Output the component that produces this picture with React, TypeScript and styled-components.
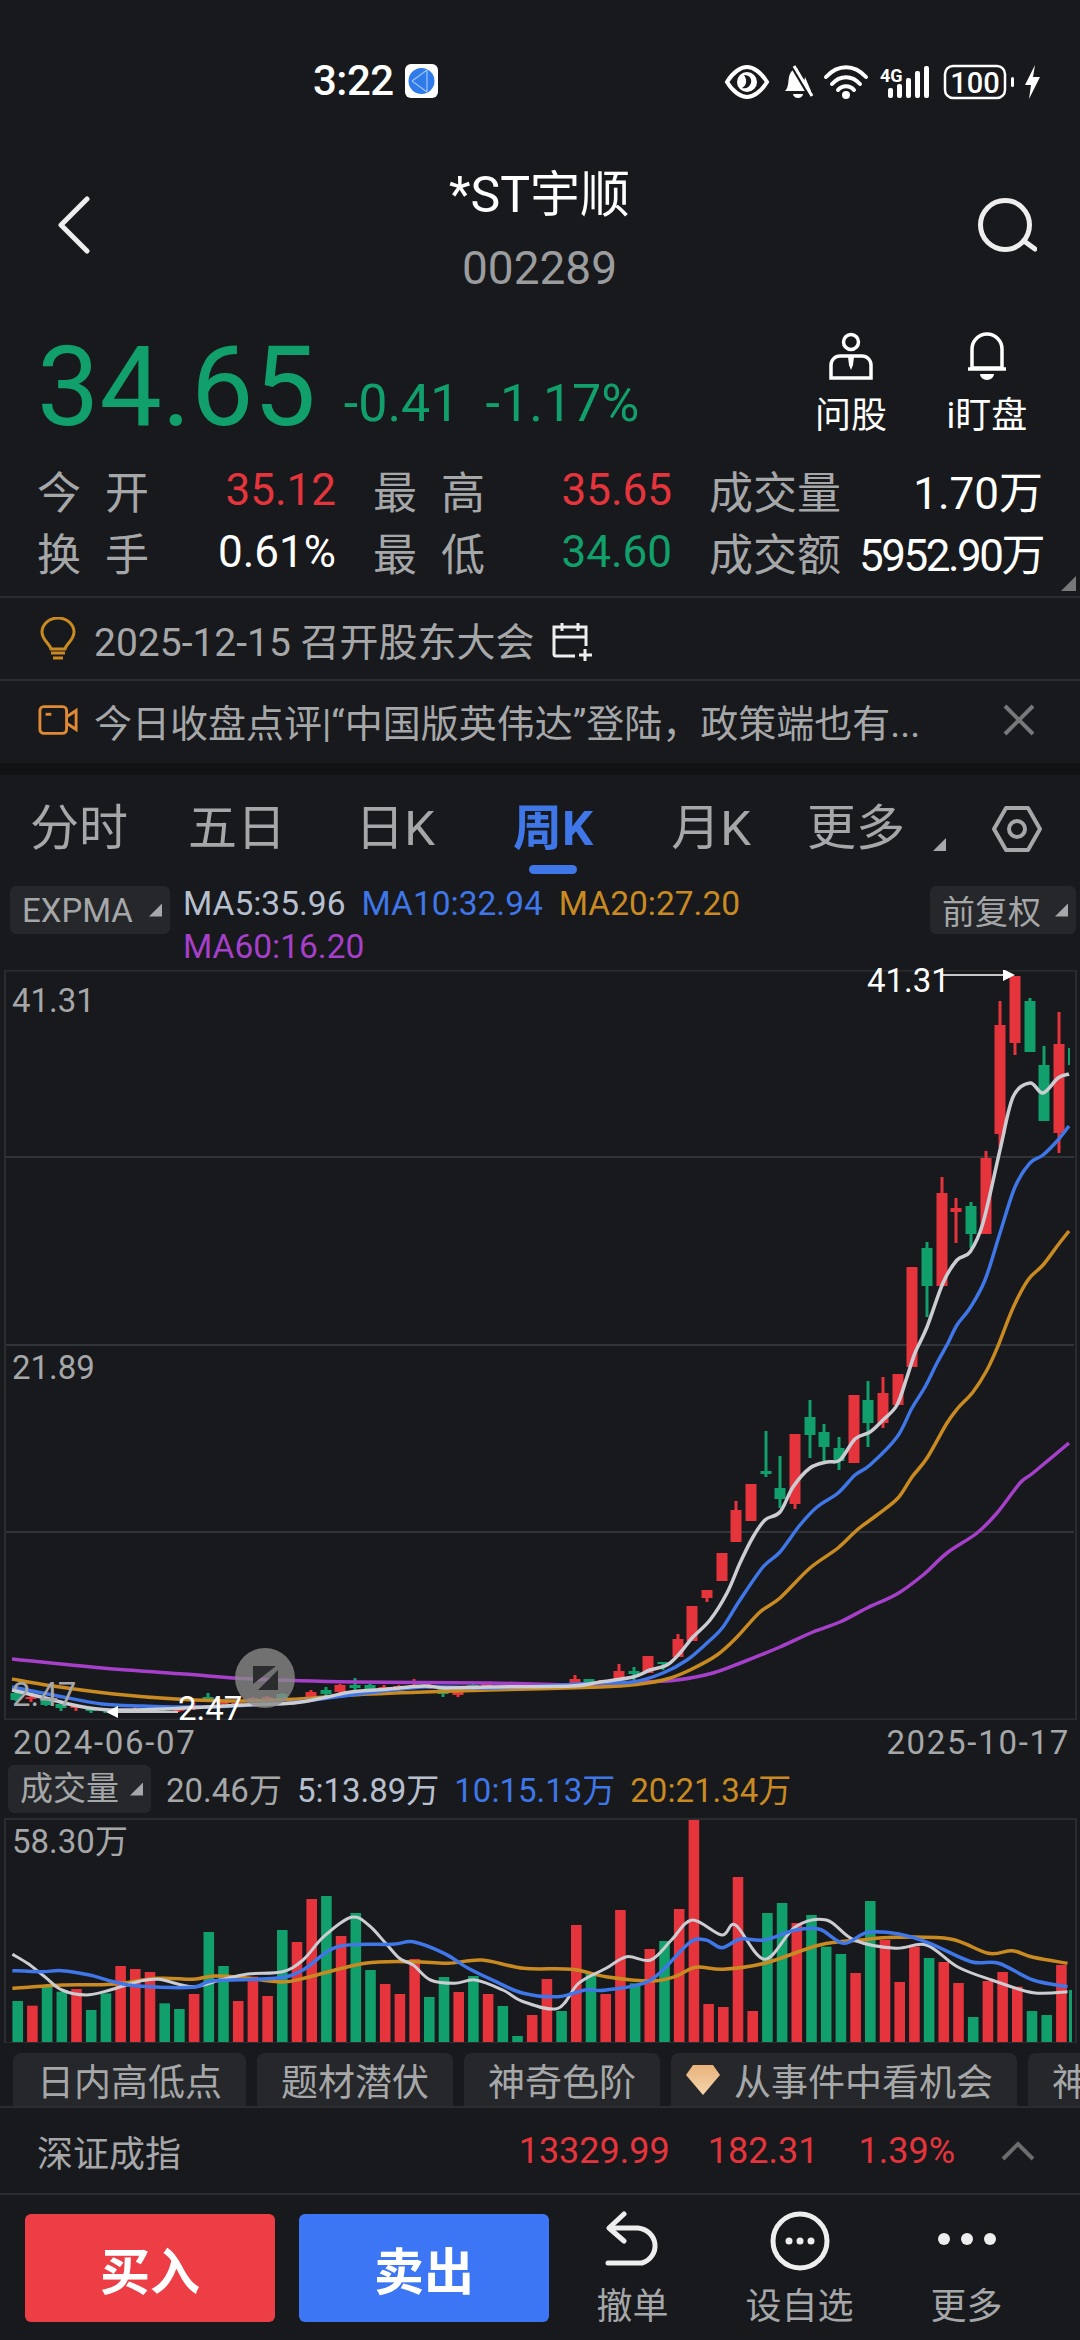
import styled, { createGlobalStyle } from "styled-components";

const RED = "#e5343c";
const GREEN = "#11a06b";
const BLUE = "#3f76e8";
const ORANGE = "#c98a22";
const PURPLE = "#a63fc9";
const LINE_WHITE = "#cbcdd2";
const GREY = "#a6a7a9";
const BORDER = "#2a2c30";

const GlobalStyle = createGlobalStyle`
    html, body {
        margin: 0;
        padding: 0;
        background: #17191c;
    }
    * {
        box-sizing: border-box;
    }
`;

const Page = styled.div`
    width: 1080px;
    height: 2340px;
    overflow: hidden;
    background: #17191c;
    color: #fff;
    font-family: Roboto, "Noto Sans CJK SC", sans-serif;
    display: flex;
    flex-direction: column;
`;

const StatusBar = styled.div`
    height: 130px;
    flex: none;
    padding: 64px 40px 0 313px;
    display: flex;
    align-items: flex-start;
    justify-content: space-between;
`;

const Clock = styled.div`
    display: flex;
    align-items: center;
    gap: 11px;
    font-size: 42px;
    letter-spacing: -0.5px;
    line-height: 34px;
    font-weight: 500;
`;

const Header = styled.header`
    height: 190px;
    flex: none;
    padding: 0 43px 0 58px;
    display: flex;
    align-items: center;
    justify-content: space-between;
`;

const TitleBlock = styled.div`
    text-align: center;
    margin: 0 0 -5px 12px;
    h1 {
        margin: 0;
        font-size: 50px;
        line-height: 66px;
        font-weight: 400;
    }
    p {
        margin: 15px 0 0;
        font-size: 46px;
        line-height: 50px;
        color: #9b9c9e;
    }
`;

const PriceRow = styled.section`
    height: 135px;
    flex: none;
    padding: 0 25px 0 37px;
    display: flex;
    align-items: flex-start;
`;

const Price = styled.div`
    font-size: 111px;
    line-height: 114px;
    margin-top: 10px;
    color: ${GREEN};
`;

const Change = styled.div`
    display: flex;
    gap: 26px;
    margin: 54px 0 0 28px;
    font-size: 52px;
    line-height: 60px;
    color: ${GREEN};
`;

const QuickActions = styled.div`
    margin-left: auto;
    display: flex;
`;

const QuickAction = styled.div`
    width: 136px;
    height: 116px;
    display: flex;
    flex-direction: column;
    align-items: center;
    justify-content: space-between;
    font-size: 36px;
    line-height: 40px;
    padding-top: 12px;
`;

const Stats = styled.section`
    height: 143px;
    flex: none;
    padding: 4px 38px 0 37px;
    display: grid;
    grid-template-columns: 299px 299px 334px;
    column-gap: 37px;
    grid-auto-rows: 62px;
    position: relative;
    border-bottom: 2px solid ${BORDER};
`;

const Stat = styled.div`
    display: flex;
    align-items: center;
    justify-content: space-between;
    font-size: 44px;
    white-space: nowrap;
    color: ${GREY};
`;

const StatLabel = styled.span<{ $wide?: boolean }>`
    flex: none;
    width: ${(p) => (p.$wide ? "132px" : "112px")};
    text-align-last: justify;
`;

const StatValue = styled.span<{ $color?: string; $tight?: boolean }>`
    color: ${(p) => p.$color || "#fff"};
    letter-spacing: ${(p) => (p.$tight ? "-2.5px" : "0")};
`;

const Corner = styled.i`
    position: absolute;
    right: 4px;
    bottom: 5px;
    width: 15px;
    height: 15px;
    background: #77787a;
    clip-path: polygon(100% 0, 100% 100%, 0 100%);
`;

const Notice = styled.div<{ $line?: boolean }>`
    height: ${(p) => (p.$line ? 83 : 82)}px;
    flex: none;
    padding: ${(p) => (p.$line ? "0 45px 0 38px" : "0 45px 4px 38px")};
    display: flex;
    align-items: center;
    gap: 16px;
    font-size: 39px;
    color: ${GREY};
    border-bottom: ${(p) => (p.$line ? `2px solid ${BORDER}` : "none")};
    svg {
        flex: none;
    }
`;

const NoticeText = styled.span`
    flex: 1;
    font-size: 38px;
    white-space: nowrap;
`;

const CalendarIcon = styled.svg`
    margin-top: 6px;
`;

const Band = styled.div`
    height: 12px;
    flex: none;
    background: #111214;
`;

const Tabs = styled.nav`
    height: 105px;
    flex: none;
    display: flex;
    align-items: flex-start;
`;

const Tab = styled.div<{ $active?: boolean; $width?: number }>`
    flex: none;
    width: ${(p) => p.$width || 158}px;
    padding-top: 24px;
    position: relative;
    text-align: center;
    font-size: 49px;
    line-height: 60px;
    font-weight: ${(p) => (p.$active ? 700 : 400)};
    color: ${(p) => (p.$active ? BLUE : GREY)};
    &::after {
        content: "";
        display: ${(p) => (p.$active ? "block" : "none")};
        position: absolute;
        left: 55px;
        bottom: -15px;
        width: 48px;
        height: 9px;
        border-radius: 5px;
        background: ${BLUE};
    }
`;

const Caret = styled.i<{ $size?: number }>`
    display: inline-block;
    flex: none;
    width: ${(p) => p.$size || 13}px;
    height: ${(p) => p.$size || 13}px;
    background: ${GREY};
    clip-path: polygon(100% 0, 100% 100%, 0 100%);
`;

const MoreCaret = styled(Caret)`
    margin: 63px 0 0 11px;
`;

const HexIcon = styled.svg`
    margin: 30px 0 0 46px;
    flex: none;
`;

const IndicatorRow = styled.div`
    height: 90px;
    flex: none;
    padding: 6px 4px 0 10px;
    display: flex;
    align-items: flex-start;
    justify-content: space-between;
`;

const Chip = styled.div<{ $width: number }>`
    width: ${(p) => p.$width}px;
    height: 48px;
    flex: none;
    padding: 0 8px 0 12px;
    border-radius: 6px;
    background: #25272a;
    display: flex;
    align-items: center;
    justify-content: space-between;
    font-size: 33px;
    color: ${GREY};
`;

const MaList = styled.div`
    flex: 1;
    margin: -4px 0 0 13px;
    display: flex;
    flex-wrap: wrap;
    align-items: flex-start;
    column-gap: 16px;
    font-size: 33.5px;
    line-height: 43px;
`;

const Ma = styled.span<{ $color: string; $break?: boolean }>`
    color: ${(p) => p.$color};
    flex-basis: ${(p) => (p.$break ? "100%" : "auto")};
`;

const ChartBox = styled.div<{ $height: number }>`
    height: ${(p) => p.$height}px;
    flex: none;
    position: relative;
    svg {
        display: block;
    }
`;

const AxisLabel = styled.span<{ $x: number; $y: number; $white?: boolean }>`
    position: absolute;
    left: ${(p) => p.$x}px;
    top: ${(p) => p.$y}px;
    font-size: 33px;
    line-height: 36px;
    color: ${(p) => (p.$white ? "#fff" : GREY)};
`;

const DateRow = styled.div`
    height: 40px;
    flex: none;
    padding: 5px 10px 0 13px;
    display: flex;
    align-items: center;
    justify-content: space-between;
    font-size: 33px;
    letter-spacing: 1.7px;
    color: ${GREY};
`;

const VolumeHeader = styled.div`
    height: 58px;
    flex: none;
    padding: 5px 0 0 8px;
    display: flex;
    align-items: flex-start;
    gap: 15px;
    font-size: 33px;
    line-height: 52px;
`;

const VolValue = styled.span<{ $color: string }>`
    color: ${(p) => p.$color};
`;

const ChipRow = styled.div`
    height: 65px;
    flex: none;
    padding: 10px 0 0 13px;
    display: flex;
    gap: 11px;
    overflow: hidden;
    border-bottom: 2px solid ${BORDER};
`;

const FeatureChip = styled.div`
    flex: none;
    height: 100%;
    padding: 0 24px;
    border-radius: 8px 8px 0 0;
    background: #25272a;
    display: flex;
    align-items: center;
    gap: 14px;
    font-size: 37px;
    color: ${GREY};
    &:has(svg) {
        padding-left: 15px;
    }
`;

const IndexRow = styled.div`
    height: 87px;
    flex: none;
    padding: 0 44px 0 37px;
    display: flex;
    align-items: center;
    font-size: 36px;
    color: ${GREY};
    border-bottom: 2px solid ${BORDER};
    span:first-child {
        margin-right: auto;
    }
`;

const IndexValue = styled.span<{ $gap: number }>`
    color: ${RED};
    margin-right: ${(p) => p.$gap}px;
`;

const Footer = styled.footer`
    flex: 1;
    padding: 19px 30px 0 25px;
    display: flex;
    align-items: flex-start;
`;

const TradeButton = styled.button<{ $color: string; $gap?: boolean }>`
    width: 250px;
    height: 108px;
    margin-right: ${(p) => (p.$gap ? "24px" : "0")};
    border: 0;
    border-radius: 6px;
    background: ${(p) => p.$color};
    color: #fff;
    font-family: inherit;
    font-size: 50px;
    font-weight: 700;
    padding: 0;
`;

const NavItem = styled.div`
    width: 167px;
    height: 116px;
    margin-top: -3px;
    display: flex;
    flex-direction: column;
    align-items: center;
    justify-content: space-between;
    font-size: 36px;
    line-height: 40px;
    color: ${GREY};
`;

const NavIcon = styled.svg`
    flex: none;
    margin-bottom: 12px;
`;

type Pt = [number, number];

// catmull-rom through the traced points, so the averages stay round
const smooth = (pts: Pt[]) => {
    let d = `M${pts[0][0]} ${pts[0][1]}`;
    for (let i = 0; i < pts.length - 1; i++) {
        const p0 = pts[i - 1] || pts[i];
        const p1 = pts[i];
        const p2 = pts[i + 1];
        const p3 = pts[i + 2] || p2;
        const c1x = p1[0] + (p2[0] - p0[0]) / 6;
        const c1y = p1[1] + (p2[1] - p0[1]) / 6;
        const c2x = p2[0] - (p3[0] - p1[0]) / 6;
        const c2y = p2[1] - (p3[1] - p1[1]) / 6;
        d += `C${c1x.toFixed(1)} ${c1y.toFixed(1)} ${c2x.toFixed(1)} ${c2y.toFixed(1)} ${p2[0]} ${p2[1]}`;
    }
    return d;
};

const ma5: Pt[] = [[12, 1690], [41, 1697], [78, 1706], [110, 1710], [163, 1709], [245, 1705], [294, 1703], [327, 1697], [351, 1692], [388, 1689], [424, 1686], [445, 1688], [490, 1687], [571, 1686], [600, 1682], [633, 1677], [650, 1670], [667, 1665], [680, 1653], [693, 1637], [710, 1620], [727, 1593], [740, 1563], [753, 1537], [765, 1520], [780, 1512], [793, 1487], [810, 1468], [827, 1462], [840, 1460], [855, 1439], [870, 1432], [883, 1420], [897, 1405], [907, 1377], [915, 1353], [927, 1327], [943, 1283], [957, 1260], [970, 1252], [983, 1223], [1000, 1150], [1013, 1097], [1030, 1083], [1043, 1093], [1058, 1078], [1069, 1074]];
const ma10: Pt[] = [[12, 1687], [53, 1695], [102, 1704], [143, 1706], [204, 1707], [265, 1704], [298, 1702], [351, 1695], [424, 1687], [490, 1688], [600, 1683], [633, 1682], [663, 1673], [687, 1660], [707, 1643], [723, 1627], [740, 1600], [763, 1567], [780, 1552], [800, 1525], [817, 1507], [838, 1493], [855, 1475], [870, 1465], [897, 1437], [912, 1408], [925, 1387], [937, 1363], [948, 1343], [957, 1325], [970, 1308], [985, 1280], [1000, 1233], [1015, 1187], [1030, 1163], [1043, 1155], [1058, 1140], [1069, 1126]];
const ma20: Pt[] = [[12, 1679], [53, 1686], [114, 1694], [176, 1699], [245, 1701], [298, 1699], [351, 1695], [424, 1692], [490, 1690], [600, 1687], [640, 1684], [667, 1679], [690, 1670], [717, 1655], [737, 1637], [760, 1612], [780, 1598], [810, 1568], [838, 1548], [857, 1530], [877, 1515], [898, 1498], [912, 1477], [927, 1458], [947, 1423], [958, 1408], [973, 1392], [987, 1370], [998, 1346], [1013, 1308], [1028, 1280], [1043, 1265], [1058, 1245], [1069, 1231]];
const ma60: Pt[] = [[12, 1659], [102, 1668], [184, 1674], [253, 1679], [355, 1682], [490, 1683], [571, 1685], [600, 1684], [643, 1682], [677, 1680], [713, 1673], [743, 1662], [780, 1647], [813, 1632], [840, 1622], [867, 1608], [897, 1594], [923, 1575], [947, 1553], [977, 1533], [997, 1513], [1020, 1483], [1033, 1473], [1069, 1443]];

// x, body top, body bottom, wick top, wick bottom, up
type Candle = [number, number, number, number, number, boolean];
const candles: Candle[] = [
    [16, 1693, 1700, 1691, 1701, false], [31, 1697, 1699, 1695, 1702, true], [46, 1700, 1705, 1699, 1706, false],
    [61, 1704, 1708, 1703, 1711, false], [76, 1706, 1708, 1704, 1711, true], [91, 1708, 1711, 1708, 1713, false],
    [105, 1709, 1711, 1709, 1713, false], [120, 1710, 1712, 1709, 1713, true], [135, 1709, 1711, 1707, 1713, true],
    [150, 1709, 1711, 1708, 1712, true], [164, 1708, 1710, 1707, 1711, false], [179, 1708, 1711, 1707, 1712, true],
    [194, 1705, 1709, 1703, 1710, true], [208, 1697, 1700, 1693, 1701, false], [223, 1702, 1704, 1701, 1705, true],
    [237, 1703, 1705, 1702, 1706, true], [253, 1698, 1702, 1697, 1704, true], [267, 1697, 1702, 1696, 1704, true],
    [282, 1694, 1700, 1693, 1702, false], [296, 1700, 1703, 1699, 1704, true], [311, 1692, 1697, 1690, 1699, true],
    [326, 1690, 1694, 1687, 1697, false], [340, 1685, 1692, 1684, 1693, true], [355, 1685, 1688, 1678, 1690, false],
    [370, 1685, 1689, 1684, 1690, false], [384, 1687, 1690, 1685, 1691, true], [399, 1686, 1689, 1685, 1690, true],
    [414, 1685, 1688, 1679, 1689, true], [429, 1685, 1688, 1684, 1689, true], [443, 1687, 1694, 1686, 1697, false],
    [458, 1692, 1695, 1690, 1697, true], [473, 1685, 1687, 1684, 1689, false], [487, 1683, 1686, 1682, 1687, true],
    [502, 1687, 1689, 1686, 1691, false], [517, 1686, 1688, 1685, 1689, true], [531, 1685, 1687, 1684, 1688, true],
    [546, 1685, 1687, 1684, 1688, true], [561, 1684, 1687, 1683, 1688, true], [575, 1679, 1683, 1675, 1684, true],
    [589, 1679, 1682, 1679, 1683, false], [604, 1680, 1684, 1680, 1684, true], [619, 1671, 1680, 1664, 1680, true],
    [634, 1671, 1674, 1667, 1680, false], [648, 1656, 1673, 1656, 1673, true], [663, 1662, 1664, 1662, 1670, false],
    [678, 1639, 1657, 1634, 1657, true], [692, 1606, 1641, 1606, 1641, true], [707, 1590, 1598, 1590, 1602, true],
    [722, 1553, 1581, 1553, 1581, true], [736, 1510, 1542, 1501, 1542, true], [751, 1484, 1521, 1484, 1521, true],
    [766, 1471, 1474, 1431, 1477, false], [780, 1488, 1499, 1456, 1508, false], [795, 1434, 1504, 1434, 1509, true],
    [810, 1417, 1435, 1400, 1458, false], [824, 1432, 1447, 1424, 1461, false], [839, 1448, 1461, 1437, 1470, false],
    [854, 1395, 1463, 1395, 1463, true], [868, 1400, 1423, 1381, 1447, false], [883, 1393, 1423, 1377, 1428, true],
    [898, 1374, 1405, 1374, 1405, true], [912, 1267, 1367, 1267, 1367, true], [927, 1248, 1286, 1242, 1317, false],
    [942, 1193, 1286, 1177, 1286, true], [956, 1208, 1212, 1198, 1243, true], [971, 1206, 1234, 1202, 1248, false],
    [986, 1158, 1234, 1151, 1234, true], [1000, 1025, 1134, 1001, 1147, true], [1015, 976, 1043, 976, 1055, true],
    [1030, 1001, 1052, 998, 1052, false], [1044, 1065, 1121, 1046, 1121, false], [1059, 1044, 1133, 1012, 1153, true],
];

// bar top traced from the volume pane, R = up week
const volumeBars: [number, string][] = [
    [843, "G"], [857, "R"], [800, "G"], [815, "G"], [807, "R"], [870, "G"], [820, "G"], [738, "R"], [747, "R"], [756, "R"],
    [850, "G"], [867, "G"], [822, "R"], [636, "G"], [738, "G"], [843, "R"], [770, "R"], [828, "R"], [630, "G"], [666, "R"],
    [537, "R"], [528, "G"], [648, "R"], [579, "G"], [750, "G"], [792, "R"], [822, "R"], [717, "R"], [831, "G"], [771, "G"],
    [816, "R"], [768, "G"], [822, "R"], [858, "G"], [948, "G"], [885, "R"], [777, "R"], [873, "G"], [615, "R"], [762, "G"],
    [822, "R"], [570, "R"], [790, "G"], [687, "R"], [663, "G"], [567, "R"], [300, "R"], [852, "R"], [861, "R"], [471, "R"],
    [873, "R"], [579, "G"], [549, "G"], [609, "R"], [585, "G"], [680, "G"], [702, "G"], [759, "R"], [543, "G"], [660, "R"],
    [786, "R"], [680, "R"], [714, "G"], [726, "R"], [789, "R"], [891, "G"], [783, "R"], [756, "R"], [800, "R"], [873, "G"],
    [885, "G"], [735, "R"],
];

const VOL_BOTTOM = 2042;
const volY = (z: number) => 1720 + z / 3;
const volLine = (raw: number[][]): Pt[] => raw.map(([x, y]) => [+(x / 1.452).toFixed(1), +volY(y).toFixed(1)]);

const volWhite = volLine([[18, 703], [40, 730], [65, 770], [90, 810], [125, 825], [160, 810], [200, 785], [230, 778], [280, 800], [320, 780], [360, 762], [410, 755], [440, 720], [470, 650], [510, 592], [535, 615], [560, 670], [580, 715], [600, 735], [625, 780], [660, 790], [690, 780], [730, 810], [760, 845], [810, 865], [840, 790], [880, 745], [910, 710], [945, 720], [975, 660], [1005, 600], [1048, 645], [1068, 615], [1110, 718], [1155, 620], [1200, 600], [1240, 660], [1300, 685], [1345, 675], [1390, 740], [1440, 780], [1500, 818], [1550, 815]]);
const volBlue = volLine([[18, 752], [60, 755], [90, 752], [130, 765], [165, 785], [200, 798], [280, 802], [310, 782], [400, 775], [440, 750], [490, 680], [570, 673], [600, 665], [645, 700], [680, 745], [720, 785], [760, 820], [810, 830], [850, 810], [880, 810], [945, 780], [1000, 670], [1025, 660], [1048, 683], [1075, 657], [1110, 660], [1155, 630], [1190, 628], [1225, 670], [1260, 637], [1305, 642], [1350, 670], [1410, 725], [1450, 730], [1500, 780], [1550, 800]]);
const volOrange = volLine([[18, 805], [90, 795], [160, 793], [230, 775], [280, 778], [310, 768], [350, 772], [410, 786], [450, 770], [530, 730], [600, 725], [650, 730], [700, 720], [760, 745], [830, 748], [880, 770], [945, 783], [980, 770], [1010, 742], [1050, 748], [1110, 730], [1190, 675], [1250, 660], [1300, 652], [1380, 657], [1435, 700], [1470, 692], [1500, 712], [1550, 730]]);

const PriceChart = () => (
    <svg width="1080" height="750" viewBox="0 970 1080 750">
        <rect x="5" y="970.5" width="1071" height="749" fill="none" stroke={BORDER} strokeWidth="2" />
        {[1157, 1345, 1532].map((y) => (
            <line key={y} x1="6" x2="1074" y1={y} y2={y} stroke="#3a3c40" strokeWidth="1.5" />
        ))}
        {candles.map(([x, t, b, wt, wb, up]) => (
            <g key={x} fill={up ? RED : GREEN}>
                <rect x={x - 1.5} y={wt} width="3" height={wb - wt} />
                <rect x={x - 5.5} y={t} width="11" height={b - t} />
            </g>
        ))}
        <rect x="1068" y="1048" width="2" height="17" fill={GREEN} />
        <path d={smooth(ma60)} fill="none" stroke={PURPLE} strokeWidth="3.5" />
        <path d={smooth(ma20)} fill="none" stroke={ORANGE} strokeWidth="3.5" />
        <path d={smooth(ma10)} fill="none" stroke={BLUE} strokeWidth="3.5" />
        <path d={smooth(ma5)} fill="none" stroke={LINE_WHITE} strokeWidth="3.5" />
        <line x1="943" x2="1006" y1="975" y2="975" stroke="#c8c8c8" strokeWidth="2" />
        <path d="M1003 969L1015 975L1003 981Z" fill="#fff" />
        <line x1="118" x2="178" y1="1712" y2="1712" stroke="#c8c8c8" strokeWidth="2" />
        <path d="M118 1706L106 1712L118 1718Z" fill="#fff" />
        <circle cx="265" cy="1678" r="30" fill="#8a8a8a" fillOpacity="0.78" />
        <path d="M253 1666H276L253 1684ZM278 1670V1690H258Z" fill="#2b2c2e" />
    </svg>
);

const VolumeChart = () => (
    <svg width="1080" height="225" viewBox="0 1818 1080 225">
        <rect x="5" y="1819" width="1071" height="224" fill="none" stroke={BORDER} strokeWidth="2" />
        {volumeBars.map(([z, c], i) => (
            <rect key={i} x={12.4 + i * 14.7} y={volY(z)} width="10.6" height={VOL_BOTTOM - volY(z)} fill={c === "R" ? RED : GREEN} />
        ))}
        <rect x="1069" y={volY(810)} width="3" height={VOL_BOTTOM - volY(810)} fill={GREEN} />
        <path d={smooth(volOrange)} fill="none" stroke={ORANGE} strokeWidth="3.5" />
        <path d={smooth(volWhite)} fill="none" stroke={LINE_WHITE} strokeWidth="3" />
        <path d={smooth(volBlue)} fill="none" stroke={BLUE} strokeWidth="3.5" />
    </svg>
);

const StatusIcons = () => (
    <svg width="320" height="36" viewBox="720 63 320 36">
        {/* eye */}
        <path d="M727 81C733 71 741 66 747 66C753 66 761 71 767 81C761 91 753 96 747 96C741 96 733 91 727 81Z" fill="none" stroke="#fff" strokeWidth="4" />
        <circle cx="747" cy="81" r="10" fill="#fff" />
        <path d="M744 74C750 74 752 78 751 82C749 87 745 88 742 87C746 85 748 80 744 74Z" fill="#17191c" />
        {/* muted bell */}
        <path d="M785 90C789 86 788 80 789 76C790 71 793 68 797 67L809 90Z" fill="#fff" />
        <path d="M805 76L811 90H802Z" fill="#fff" />
        <path d="M793 93H803A5 4 0 0 1 793 93Z" fill="#fff" />
        <line x1="791" y1="64" x2="810" y2="96" stroke="#17191c" strokeWidth="3" />
        <line x1="794" y1="65" x2="812" y2="95" stroke="#fff" strokeWidth="3" />
        {/* wifi */}
        <path d="M826 76C838 63 854 63 866 76" fill="none" stroke="#fff" strokeWidth="4" strokeLinecap="round" />
        <path d="M832 83C840 74 852 74 860 83" fill="none" stroke="#fff" strokeWidth="4" strokeLinecap="round" />
        <path d="M838 89C842 84 850 84 854 89" fill="none" stroke="#fff" strokeWidth="4" strokeLinecap="round" />
        <circle cx="846" cy="94" r="4" fill="#fff" />
        {/* signal */}
        <text x="880" y="81" fill="#fff" fontSize="18" fontWeight="700" fontFamily="Roboto, sans-serif">4G</text>
        <g fill="#fff">
            <rect x="888" y="87" width="5" height="10" rx="2" />
            <rect x="897" y="83" width="5" height="14" rx="2" />
            <rect x="906" y="77" width="5" height="20" rx="2" />
            <rect x="915" y="70" width="5" height="27" rx="2" />
            <rect x="924" y="65" width="5" height="32" rx="2" />
        </g>
        {/* battery */}
        <rect x="945" y="65" width="60" height="32" rx="8" fill="none" stroke="#fff" strokeWidth="2.5" />
        <text x="975" y="92" textAnchor="middle" fill="#fff" fontSize="29" fontWeight="500" fontFamily="Roboto, sans-serif">100</text>
        <rect x="1011" y="76" width="3" height="10" rx="1.5" fill="#fff" />
        <path d="M1035 64L1025 84H1031L1029 98L1040 76H1033Z" fill="#fff" />
    </svg>
);

const App = () => (
    <Page>
        <GlobalStyle />
        <StatusBar>
            <Clock>
                3:22
                <svg width="33" height="34" viewBox="0 0 33 34">
                    <rect width="33" height="34" rx="6" fill="#fff" />
                    <circle cx="16.5" cy="17" r="13" fill="#2f7bea" />
                    <path d="M7 17L22 6M7 17L22 28M22 6V28" stroke="#9cc4f7" strokeWidth="1.2" fill="none" />
                </svg>
            </Clock>
            <StatusIcons />
        </StatusBar>

        <Header>
            <svg width="32" height="58" viewBox="0 0 32 58">
                <path d="M29 3L3 29L29 55" fill="none" stroke="#eee" strokeWidth="5" strokeLinecap="round" strokeLinejoin="round" />
            </svg>
            <TitleBlock>
                <h1>*ST宇顺</h1>
                <p>002289</p>
            </TitleBlock>
            <svg width="60" height="56" viewBox="0 0 60 56">
                <circle cx="28" cy="28" r="24.5" fill="none" stroke="#eee" strokeWidth="5" />
                <path d="M47 44L58 52" stroke="#eee" strokeWidth="5" strokeLinecap="round" />
            </svg>
        </Header>

        <PriceRow>
            <Price>34.65</Price>
            <Change>
                <span>-0.41</span>
                <span>-1.17%</span>
            </Change>
            <QuickActions>
                <QuickAction>
                    <svg width="46" height="48" viewBox="0 0 46 48">
                        <circle cx="23" cy="10" r="7.5" fill="none" stroke="#fff" strokeWidth="3.5" />
                        <path d="M12 24H34A9 9 0 0 1 43 33V46H3V33A9 9 0 0 1 12 24Z" fill="none" stroke="#fff" strokeWidth="3.5" />
                        <path d="M20 25H26L25 33L23 38L21 33Z" fill="#fff" />
                    </svg>
                    问股
                </QuickAction>
                <QuickAction>
                    <svg width="40" height="48" viewBox="0 0 40 48">
                        <path d="M5 36V17A15 15 0 0 1 35 17V36Z" fill="none" stroke="#fff" strokeWidth="3.5" />
                        <path d="M1 37H39" stroke="#fff" strokeWidth="3.5" />
                        <path d="M13 42H27A7 6 0 0 1 13 42Z" fill="#fff" />
                    </svg>
                    i盯盘
                </QuickAction>
            </QuickActions>
        </PriceRow>

        <Stats>
            <Stat>
                <StatLabel>今 开</StatLabel>
                <StatValue $color={RED}>35.12</StatValue>
            </Stat>
            <Stat>
                <StatLabel>最 高</StatLabel>
                <StatValue $color={RED}>35.65</StatValue>
            </Stat>
            <Stat>
                <StatLabel $wide>成交量</StatLabel>
                <StatValue>1.70万</StatValue>
            </Stat>
            <Stat>
                <StatLabel>换 手</StatLabel>
                <StatValue>0.61%</StatValue>
            </Stat>
            <Stat>
                <StatLabel>最 低</StatLabel>
                <StatValue $color={GREEN}>34.60</StatValue>
            </Stat>
            <Stat>
                <StatLabel $wide>成交额</StatLabel>
                <StatValue $tight>5952.90万</StatValue>
            </Stat>
            <Corner />
        </Stats>

        <Notice $line>
            <svg width="40" height="44" viewBox="0 0 38 44">
                <path d="M12 32C11 27 3 23 3 15A16 14 0 0 1 35 15C35 23 27 27 26 32Z" fill="none" stroke={ORANGE} strokeWidth="3" />
                <path d="M12 36H26M14 41H24" stroke={ORANGE} strokeWidth="3" />
            </svg>
            <span>2025-12-15 召开股东大会</span>
            <CalendarIcon width="42" height="40" viewBox="0 0 42 40">
                <path d="M24 34H5A2 2 0 0 1 3 32V5H35V24M3 15H35M11 1V9M27 1V9" fill="none" stroke="#eee" strokeWidth="3" />
                <path d="M34 27V39M28 33H41" fill="none" stroke="#eee" strokeWidth="3" />
            </CalendarIcon>
        </Notice>
        <Notice>
            <svg width="40" height="32" viewBox="0 0 42 32">
                <rect x="2" y="2" width="28" height="28" rx="4" fill="none" stroke="#e08a35" strokeWidth="3" />
                <path d="M31 12L40 6V26L31 20" fill="none" stroke="#e08a35" strokeWidth="3" />
                <path d="M8 10H14" stroke="#e08a35" strokeWidth="3" />
            </svg>
            <NoticeText>今日收盘点评|“中国版英伟达”登陆，政策端也有...</NoticeText>
            <svg width="32" height="32" viewBox="0 0 32 32">
                <path d="M2 2L30 30M30 2L2 30" stroke="#77787a" strokeWidth="4" />
            </svg>
        </Notice>
        <Band />

        <Tabs>
            <Tab>分时</Tab>
            <Tab>五日</Tab>
            <Tab>日K</Tab>
            <Tab $active>周K</Tab>
            <Tab>月K</Tab>
            <Tab $width={132}>更多</Tab>
            <MoreCaret />
            <HexIcon width="50" height="48" viewBox="0 0 50 48">
                <path d="M14 3H36L48 24L36 45H14L2 24Z" fill="none" stroke={GREY} strokeWidth="4" strokeLinejoin="round" />
                <circle cx="25" cy="24" r="8" fill="none" stroke={GREY} strokeWidth="4" />
            </HexIcon>
        </Tabs>

        <IndicatorRow>
            <Chip $width={160}>
                EXPMA
                <Caret />
            </Chip>
            <MaList>
                <Ma $color="#b8c0d0">MA5:35.96</Ma>
                <Ma $color={BLUE}>MA10:32.94</Ma>
                <Ma $color={ORANGE}>MA20:27.20</Ma>
                <Ma $color={PURPLE} $break>MA60:16.20</Ma>
            </MaList>
            <Chip $width={146}>
                前复权
                <Caret />
            </Chip>
        </IndicatorRow>

        <ChartBox $height={750}>
            <PriceChart />
            <AxisLabel $x={12} $y={13}>41.31</AxisLabel>
            <AxisLabel $x={12} $y={380}>21.89</AxisLabel>
            <AxisLabel $x={12} $y={707}>2.47</AxisLabel>
            <AxisLabel $x={867} $y={-7} $white>41.31</AxisLabel>
            <AxisLabel $x={178} $y={721} $white>2.47</AxisLabel>
        </ChartBox>

        <DateRow>
            <span>2024-06-07</span>
            <span>2025-10-17</span>
        </DateRow>

        <VolumeHeader>
            <Chip $width={143}>
                成交量
                <Caret />
            </Chip>
            <VolValue $color={GREY}>20.46万</VolValue>
            <VolValue $color="#b8c0d0">5:13.89万</VolValue>
            <VolValue $color={BLUE}>10:15.13万</VolValue>
            <VolValue $color={ORANGE}>20:21.34万</VolValue>
        </VolumeHeader>

        <ChartBox $height={225}>
            <VolumeChart />
            <AxisLabel $x={12} $y={6}>58.30万</AxisLabel>
        </ChartBox>

        <ChipRow>
            <FeatureChip>日内高低点</FeatureChip>
            <FeatureChip>题材潜伏</FeatureChip>
            <FeatureChip>神奇色阶</FeatureChip>
            <FeatureChip>
                <svg width="34" height="30" viewBox="0 0 34 30">
                    <defs>
                        <linearGradient id="gem" x1="0" x2="0" y1="0" y2="1">
                            <stop offset="0" stopColor="#e9b27a" />
                            <stop offset="1" stopColor="#f3d6ac" />
                        </linearGradient>
                    </defs>
                    <path d="M7 0H27L34 10L17 30L0 10Z" fill="url(#gem)" />
                </svg>
                从事件中看机会
            </FeatureChip>
            <FeatureChip>神奇指标</FeatureChip>
        </ChipRow>

        <IndexRow>
            <span>深证成指</span>
            <IndexValue $gap={38}>13329.99</IndexValue>
            <IndexValue $gap={40}>182.31</IndexValue>
            <IndexValue $gap={45}>1.39%</IndexValue>
            <svg width="36" height="20" viewBox="0 0 36 20">
                <path d="M3 18L18 3L33 18" fill="none" stroke="#6b6c6e" strokeWidth="4" />
            </svg>
        </IndexRow>

        <Footer>
            <TradeButton $color="#ee3e45" $gap>买入</TradeButton>
            <TradeButton $color="#3d76f5">卖出</TradeButton>
            <NavItem>
                <NavIcon width="58" height="56" viewBox="0 0 58 56">
                    <path d="M20 3L5 17L20 30" fill="none" stroke="#eee" strokeWidth="5" strokeLinecap="round" strokeLinejoin="round" />
                    <path d="M6 17H34A19 18 0 0 1 38 52H4" fill="none" stroke="#eee" strokeWidth="5" strokeLinecap="round" />
                </NavIcon>
                撤单
            </NavItem>
            <NavItem>
                <NavIcon width="60" height="60" viewBox="0 0 60 60">
                    <circle cx="30" cy="30" r="27" fill="none" stroke="#eee" strokeWidth="5" />
                    <circle cx="19" cy="30" r="3.5" fill="#eee" />
                    <circle cx="30" cy="30" r="3.5" fill="#eee" />
                    <circle cx="41" cy="30" r="3.5" fill="#eee" />
                </NavIcon>
                设自选
            </NavItem>
            <NavItem>
                <NavIcon width="62" height="56" viewBox="0 0 62 56">
                    <circle cx="8" cy="28" r="6" fill="#eee" />
                    <circle cx="31" cy="28" r="6" fill="#eee" />
                    <circle cx="54" cy="28" r="6" fill="#eee" />
                </NavIcon>
                更多
            </NavItem>
        </Footer>
    </Page>
);

export default App;
